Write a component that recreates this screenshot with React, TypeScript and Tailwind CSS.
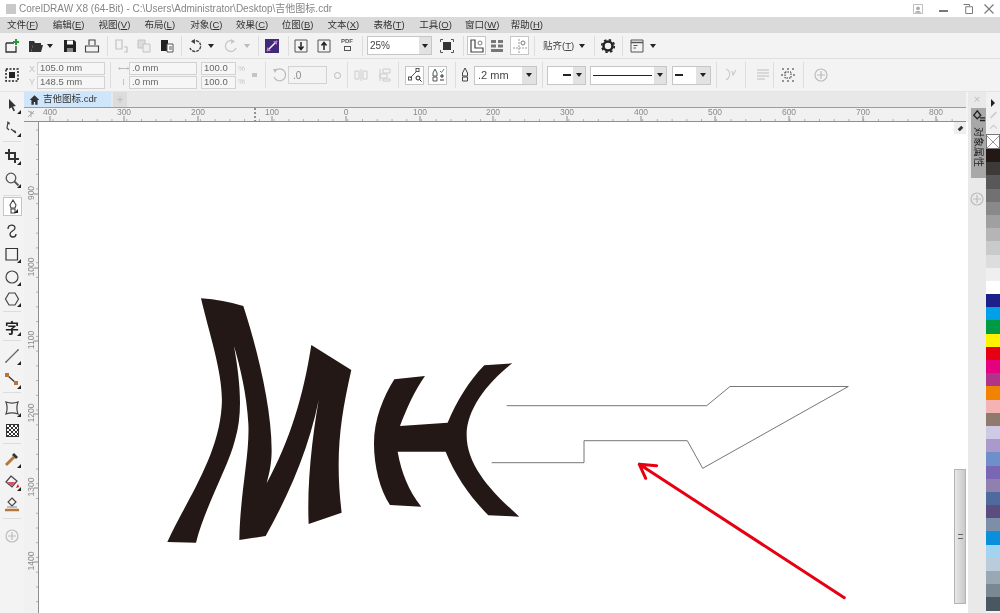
import type { ReactNode } from "react";

const menus = [
  ["文件", "F"], ["编辑", "E"], ["视图", "V"], ["布局", "L"], ["对象", "C"], ["效果", "C"],
  ["位图", "B"], ["文本", "X"], ["表格", "T"], ["工具", "O"], ["窗口", "W"], ["帮助", "H"],
];

const swatches = [
  "#231815", "#3e3a39", "#595757", "#727171", "#898989", "#9fa0a0", "#b5b5b6", "#c9caca", "#dcdddd", "#efefef", "#ffffff",
  "#1d2088", "#00a0e9", "#009944", "#fff100", "#e60012", "#e4007f", "#b0358a", "#f08300", "#f5b2b2", "#8f7a6e",
  "#cfc9e6", "#a99acb", "#6f8fcb", "#7a66b2", "#9080b0", "#4f6a9e", "#5c4d80", "#7d8fa8", "#0a8fdc", "#a0d4f0",
  "#b8ccdc", "#9aa8b4", "#7a8894", "#4a5660",
];

function Ico({ className = "", children }: { className?: string; children: ReactNode }) {
  return (
    <span className={`flex h-[16px] w-[16px] shrink-0 items-center justify-center ${className}`}>
      <svg className="h-[16px] w-[16px]" viewBox="0 0 16 16" fill="none">
        {children}
      </svg>
    </span>
  );
}

function Sep({ className = "" }: { className?: string }) {
  return <span className={`h-[20px] w-px shrink-0 bg-[#dddddd] ${className}`} />;
}

function Caret({ className = "" }: { className?: string }) {
  return <span className={`h-0 w-0 shrink-0 border-x-[3px] border-t-[4px] border-x-transparent border-t-[#222222] ${className}`} />;
}

function Combo({ className = "", btn = "w-[12px]", children }: { className?: string; btn?: string; children: ReactNode }) {
  return (
    <div className={`flex h-[19px] shrink-0 items-stretch border border-[#c6c6c6] bg-white ${className}`}>
      <div className="flex min-w-0 flex-1 items-center px-[2px]">{children}</div>
      <div className={`flex shrink-0 items-center justify-center bg-[#e2e2e2] ${btn}`}>
        <Caret />
      </div>
    </div>
  );
}

function Field({ className = "", children }: { className?: string; children: ReactNode }) {
  return (
    <div className={`flex h-[13px] items-center border border-[#d2d2d2] bg-[#f6f6f6] pl-[2px] text-[9.500px] text-[#666666] ${className}`}>
      {children}
    </div>
  );
}

function Plus({ className = "" }: { className?: string }) {
  return (
    <Ico className={className}>
      <circle cx="8" cy="8" r="6" stroke="#bdbdbd" strokeWidth="1.200" />
      <path d="M8 4v8M4 8h8" stroke="#bdbdbd" strokeWidth="1.200" />
    </Ico>
  );
}

function ToolCell({ className = "", children, flag = true }: { className?: string; children: ReactNode; flag?: boolean }) {
  return (
    <div className={`relative flex h-[23px] w-[24px] shrink-0 items-center justify-center ${className}`}>
      {children}
      {flag && <span className="absolute bottom-[2px] right-[3px] h-0 w-0 border-b-[4px] border-l-[4px] border-b-[#222222] border-l-transparent" />}
    </div>
  );
}

function ToolSep() {
  return <div className="mx-[3px] h-px w-[18px] shrink-0 bg-[#dcdcdc]" />;
}

function Toolbox() {
  return (
    <div className="flex w-[24px] shrink-0 flex-col items-start bg-[#f3f3f3] pt-[1px]">
      <ToolCell>
        <Ico><path d="M5 2l7 7-3 .5 2 4-1.500 .7-2-4L5 12z" fill="#333333" /></Ico>
      </ToolCell>
      <ToolCell>
        <Ico>
          <path d="M4 2l-1 6 2 2M7 9l5 4" stroke="#444444" strokeWidth="1.200" />
          <path d="M3 1l3 2-1 2zM9 10l3 1-1 2z" fill="#333333" />
        </Ico>
      </ToolCell>
      <div className="h-[2px] shrink-0" />
      <ToolSep />
      <div className="h-[2px] shrink-0" />
      <ToolCell>
        <Ico><path d="M5 1v10h10M1 5h10v10" stroke="#333333" strokeWidth="2" /></Ico>
      </ToolCell>
      <ToolCell>
        <Ico>
          <circle cx="7" cy="7" r="4.800" stroke="#555555" strokeWidth="1.300" />
          <path d="M10.500 10.500l4 4" stroke="#555555" strokeWidth="1.800" />
        </Ico>
      </ToolCell>
      <div className="h-[5px] shrink-0" />
      <ToolSep />
      <div className="h-[1px] shrink-0" />
      <ToolCell className="ml-[3px] !h-[19px] !w-[19px] border border-[#c4c4c4] bg-white">
        <Ico>
          <path d="M8 1l3 5-1 3H6L5 6z" stroke="#444444" strokeWidth="1.100" />
          <path d="M6 10h4v4H6z" stroke="#444444" strokeWidth="1.100" />
        </Ico>
      </ToolCell>
      <div className="h-[3px] shrink-0" />
      <ToolCell flag={false}>
        <Ico><path d="M4 6c0-5 7-5 7-1 0 3-5 3-5 6 0 4 6 4 6 0" stroke="#333333" strokeWidth="1.300" /></Ico>
      </ToolCell>
      <ToolCell>
        <Ico><path d="M2 2.500h11.500V14H2z" stroke="#333333" strokeWidth="1.200" /></Ico>
      </ToolCell>
      <ToolCell>
        <Ico><circle cx="8" cy="8" r="6" stroke="#444444" strokeWidth="1.200" /></Ico>
      </ToolCell>
      <ToolCell className="!h-[21px]">
        <Ico><path d="M5 2h6l3.500 6L11 14H5L1.500 8z" stroke="#444444" strokeWidth="1.200" /></Ico>
      </ToolCell>
      <div className="h-[2px] shrink-0" />
      <ToolSep />
      <ToolCell className="mt-[3px]">
        <span className="text-[14px] leading-none font-bold text-[#222222] [font-family:'Noto_Sans_CJK_SC',sans-serif]">字</span>
      </ToolCell>
      <div className="h-[2px] shrink-0" />
      <ToolSep />
      <ToolCell className="mt-[3px]">
        <Ico><path d="M2 14L14 2" stroke="#666666" strokeWidth="1.300" /><path d="M1 15l2-1-1-1zM15 1l-2 1 1 1z" fill="#333333" /></Ico>
      </ToolCell>
      <ToolCell className="mt-[1px]">
        <Ico>
          <path d="M3 3l10 9" stroke="#333333" strokeWidth="1.300" />
          <rect x="1" y="1" width="4" height="4" fill="#b5763d" />
          <rect x="10" y="9" width="4" height="4" fill="#b5763d" />
        </Ico>
      </ToolCell>
      <div className="h-[1px] shrink-0" />
      <ToolSep />
      <ToolCell className="mt-[3px]">
        <Ico><path d="M2 2c4 1.500 8 1.500 12 0-1.500 4-1.500 8 0 12-4-1.500-8-1.500-12 0 1.500-4 1.500-8 0-12z" stroke="#444444" strokeWidth="1.200" /></Ico>
      </ToolCell>
      <ToolCell flag={false}>
        <div className="h-[13px] w-[13px] border border-[#333333] bg-[length:4px_4px] bg-[conic-gradient(#333333_25%,#ffffff_0_50%,#333333_0_75%,#ffffff_0)]" />
      </ToolCell>
      <div className="h-[1px] shrink-0" />
      <ToolSep />
      <ToolCell className="mt-[3px]">
        <Ico>
          <path d="M2 14l8-8" stroke="#b5763d" strokeWidth="3" />
          <path d="M10 2l4 4-2 2-4-4z" fill="#333333" />
        </Ico>
      </ToolCell>
      <ToolCell>
        <Ico>
          <path d="M7 2l6 5-5 6-6-5z" stroke="#444444" strokeWidth="1.200" />
          <path d="M3 8h8l-3 4z" fill="#d9506a" />
          <path d="M14 10l1 3-3 1z" fill="#e60012" />
        </Ico>
      </ToolCell>
      <ToolCell flag={false}>
        <Ico>
          <path d="M8 1l4 4-4 4-4-4z" stroke="#444444" strokeWidth="1.100" />
          <path d="M1 13h14" stroke="#b5763d" strokeWidth="2.500" />
          <path d="M3 10h10" stroke="#888888" />
        </Ico>
      </ToolCell>
      <div className="h-[2px] shrink-0" />
      <ToolSep />
      <div className="mt-[9px] flex w-[24px] justify-center">
        <Plus />
      </div>
    </div>
  );
}

const hLabels = [
  ["400", 26], ["300", 100], ["200", 174], ["100", 248], ["0", 322], ["100", 396], ["200", 469],
  ["300", 543], ["400", 617], ["500", 691], ["600", 765], ["700", 839], ["800", 912],
] as const;

const vLabels = [["900", 193], ["1000", 267], ["1100", 340], ["1200", 413], ["1300", 487], ["1400", 561]] as const;

function HRuler() {
  const minor = Array.from({ length: 62 }, (_, i) => 29 + i * 14.74);
  return (
    <svg className="block h-[14px] w-full shrink-0 bg-[#f1f1f1]" viewBox="0 0 942 14">
      {minor.map((x) => (
        <path key={x} d={`M${x} 11v2`} stroke="#b0b0b0" strokeWidth="1" />
      ))}
      {hLabels.map(([t, x]) => (
        <g key={`${t}-${x}`}>
          <path d={`M${x} 8v5`} stroke="#8c8c8c" />
          <text x={x} y="7" textAnchor="middle" fontSize="8.500" fill="#8a8a8a" fontFamily="Liberation Sans, sans-serif">{t}</text>
        </g>
      ))}
      <path d="M0 13.500h942" stroke="#8e8e8e" />
      <path d="M231 0v13" stroke="#333333" strokeDasharray="2 2" />
      <path d="M4 3l6 3M4 9l6-6M7 3v6" stroke="#aaaaaa" />
    </svg>
  );
}

function VRuler() {
  return (
    <svg className="block h-full w-[15px] shrink-0 bg-[#f1f1f1]" viewBox="0 122 15 491">
      {Array.from({ length: 34 }, (_, i) => 130 + i * 14.74).map((y) => (
        <path key={y} d={`M12 ${y}h2`} stroke="#b0b0b0" />
      ))}
      {vLabels.map(([t, y]) => (
        <g key={t}>
          <path d={`M10 ${y + 1}h4`} stroke="#8c8c8c" />
          <text x="0" y="0" transform={`translate(10 ${y}) rotate(-90)`} textAnchor="middle" fontSize="8.500" fill="#8a8a8a" fontFamily="Liberation Sans, sans-serif">{t}</text>
        </g>
      ))}
      <path d="M14.500 122v491" stroke="#8e8e8e" />
    </svg>
  );
}

function Artwork() {
  return (
    <svg className="block h-full w-full" viewBox="39 122 929 491">
      {/* letters traced from a 3x crop, so they sit in their own 3x space */}
      <g transform="translate(150 280) scale(0.3333)" fill="#231815">
        <path d="M153 55Q220 60 280 78C320 200 365 380 365 510C365 550 358 580 350 610C420 480 460 350 484 195L604 270C570 420 555 530 575 698L476 732C470 600 490 440 515 312C490 470 430 620 347 768L268 780C270 640 300 520 295 430C290 340 270 260 252 198C270 300 280 400 255 480C235 560 165 680 138 788L52 786C110 660 205 530 215 380C222 290 180 170 153 55Z" />
        <path d="M733 298L825 288C795 330 770 385 750 438L893 428C920 365 955 305 1003 256L1087 250C1010 310 950 390 950 465C950 560 1030 640 1108 710L1015 706C960 650 915 585 887 515L743 515C755 580 775 630 814 680L720 675C690 630 672 560 672 490C672 420 700 350 733 298Z" />
      </g>
      <path
        fill="none"
        stroke="#777777"
        strokeWidth="1"
        d="M506.700 405.700H706.700L730 386.500H848.300L702.700 468.300L687.300 440.700H584V462.700H491.700"
      />
      <path fill="none" stroke="#e60012" strokeWidth="3" strokeLinecap="round" strokeLinejoin="round" d="M844.300 597.700L639.300 464.300M656.700 465.700L639.300 464.300L645.700 478.300" />
    </svg>
  );
}

export default function App() {
  return (
    <div className="flex h-[613px] w-[1000px] flex-col overflow-hidden bg-[#f3f3f3] text-[#333333] blur-[0.3px] [font-family:'Liberation_Sans','Noto_Sans_CJK_SC',sans-serif]">
      {/* title bar */}
      <div className="flex h-[17px] shrink-0 items-center bg-white pl-[6px] pr-[5px]">
        <span className="h-[10px] w-[10px] shrink-0 bg-[#c9c9c9]" />
        <span className="ml-[3px] flex-1 text-[10px] leading-none text-[#858585]">CorelDRAW X8 (64-Bit) - C:\Users\Administrator\Desktop\吉他图标.cdr</span>
        <Ico className="!h-[12px] !w-[12px]"><path d="M2 2h12v12H2z" stroke="#aaaaaa" /><circle cx="8" cy="7" r="2.500" fill="#aaaaaa" /><path d="M4 13c0-3 8-3 8 0z" fill="#aaaaaa" /></Ico>
        <span className="ml-[15px] mt-[4px] h-[2px] w-[9px] shrink-0 bg-[#777777]" />
        <Ico className="ml-[14px] !h-[12px] !w-[12px]"><path d="M2 2h8v2M5 5h9v9H5z" stroke="#777777" strokeWidth="1.300" /></Ico>
        <Ico className="ml-[9px] !h-[12px] !w-[12px]"><path d="M2 2l12 12M14 2L2 14" stroke="#777777" strokeWidth="1.500" /></Ico>
      </div>

      {/* menu bar */}
      <div className="flex h-[16px] shrink-0 items-center bg-[#dadada] pl-[7px]">
        {menus.map(([name, key]) => (
          <span key={name} className="w-[45.800px] shrink-0 whitespace-nowrap text-[9.500px] leading-none text-[#333333]">
            {name}(<span className="underline">{key}</span>)
          </span>
        ))}
      </div>

      {/* standard toolbar */}
      <div className="flex h-[26px] shrink-0 items-center border-b border-[#dedede] pl-[4px]">
        <Ico><path d="M2 5h8M2 5v9h10V8" stroke="#333333" strokeWidth="1.300" /><path d="M12 1v6M9 4h6" stroke="#1f9d3a" strokeWidth="2" /></Ico>
        <Ico className="ml-[8px]"><path d="M1 3h5l1 2h6v2H5l-2 7H1z" fill="#333333" /><path d="M5 7h10l-2 7H3z" fill="#333333" /></Ico>
        <Caret className="ml-[3px]" />
        <Ico className="ml-[9px]"><path d="M2 2h10l2 2v10H2z" fill="#222222" /><path d="M5 2.500h6v4H5z" fill="#ffffff" /><path d="M5 10h6v4H5z" fill="#888888" /></Ico>
        <Ico className="ml-[6px]"><path d="M5 7V2h6v5M1.500 8h13v6h-13z" stroke="#444444" strokeWidth="1.100" /></Ico>
        <Sep className="ml-[7px]" />
        <Ico className="ml-[5px]"><path d="M3 2h6v9H3zM11 9h3v5h-3" stroke="#c2c2c2" strokeWidth="1.200" /></Ico>
        <Ico className="ml-[7px]"><path d="M2 2h7v8H2z" fill="#dddddd" stroke="#c2c2c2" /><path d="M7 6h7v8H7z" fill="#eeeeee" stroke="#c2c2c2" /></Ico>
        <Ico className="ml-[7px]"><path d="M2 2h7v11H2z" fill="#222222" /><path d="M8 6h6v8H8z" fill="#ffffff" stroke="#555555" /><path d="M10 9h3M10 11h3" stroke="#555555" /></Ico>
        <Sep className="ml-[6px]" />
        <Ico className="ml-[5px]"><path d="M5 3.500A5.500 5.500 0 1 1 3 10" stroke="#444444" strokeWidth="1.400" strokeDasharray="3 1" /><path d="M8 1v5L4 3.500z" fill="#444444" /></Ico>
        <Caret className="ml-[5px]" />
        <Ico className="ml-[9px]"><path d="M11 3.500A5.500 5.500 0 1 0 13 10" stroke="#c9c9c9" strokeWidth="1.400" /><path d="M8 1v5l4-2.500z" fill="#c9c9c9" /></Ico>
        <span className="ml-[5px] h-0 w-0 shrink-0 border-x-[3px] border-t-[4px] border-x-transparent border-t-[#bbbbbb]" />
        <Sep className="ml-[8px]" />
        <Ico className="ml-[5px]"><path d="M1 1h14v14H1z" fill="#3d2a78" /><path d="M3 13L13 3" stroke="#ffffff" strokeWidth="1.500" /><path d="M9 3h4v4zM3 9v4h4z" fill="#d86fd0" /></Ico>
        <Sep className="ml-[8px]" />
        <Ico className="ml-[4px]"><path d="M2 2h12v12H2z" stroke="#555555" /><path d="M8 4v7M5.500 8.500L8 11.500l2.500-3" stroke="#222222" strokeWidth="1.500" /></Ico>
        <Ico className="ml-[7px]"><path d="M2 2h12v12H2z" stroke="#555555" /><path d="M8 12V5M5.500 7.500L8 4.500l2.500 3" stroke="#222222" strokeWidth="1.500" /></Ico>
        <span className="ml-[7px] flex h-[16px] w-[16px] shrink-0 flex-col items-center text-[6px] leading-[7px] font-bold text-[#555555]">
          PDF
          <span className="mt-[1px] h-[5px] w-[7px] border border-[#555555]" />
        </span>
        <Sep className="ml-[7px]" />
        <Combo className="ml-[4px] w-[65px]" btn="w-[12px]">
          <span className="text-[10px] text-[#444444]">25%</span>
        </Combo>
        <Ico className="ml-[7px]"><path d="M4 4h8v8H4z" fill="#333333" /><path d="M1.500 4V1.500H4M12 1.500h2.500V4M14.500 12v2.500H12M4 14.500H1.500V12" stroke="#555555" /></Ico>
        <Sep className="ml-[8px]" />
        <span className="ml-[3px] flex h-[19px] w-[19px] shrink-0 items-center justify-center border border-[#c6c6c6] bg-white">
          <Ico><path d="M2 2h4v8h8v4H2z" stroke="#444444" strokeWidth="1.200" /><circle cx="11" cy="5" r="2" stroke="#777777" /></Ico>
        </span>
        <Ico className="ml-[3px]"><path d="M2 2h5v3H2zM9 2h5v3H9zM2 6.500h5v3H2zM9 6.500h5v3H9zM2 11h12v3H2z" fill="#777777" /></Ico>
        <span className="ml-[5px] flex h-[19px] w-[19px] shrink-0 items-center justify-center border border-[#c6c6c6] bg-white">
          <Ico><path d="M7 1v14M1 10h14" stroke="#999999" strokeDasharray="2 1" /><circle cx="11" cy="5" r="2" stroke="#777777" /></Ico>
        </span>
        <Sep className="ml-[5px]" />
        <span className="ml-[8px] w-[31px] shrink-0 whitespace-nowrap text-[9.500px] leading-none text-[#444444]">贴齐(<span className="underline">T</span>)</span>
        <Caret className="ml-[5px]" />
        <Sep className="ml-[9px]" />
        <Ico className="ml-[5px]"><circle cx="8" cy="8" r="4.500" stroke="#222222" strokeWidth="2.500" /><circle cx="8" cy="8" r="6.300" stroke="#222222" strokeWidth="1.600" strokeDasharray="2.500 2.450" /></Ico>
        <Sep className="ml-[6px]" />
        <Ico className="ml-[6px]"><path d="M2 2h12v12H2z" stroke="#555555" /><path d="M2 4.500h12" stroke="#555555" strokeWidth="1.500" /><path d="M4.500 7.500h4M4.500 10h2.500" stroke="#555555" /></Ico>
        <Caret className="ml-[5px]" />
      </div>

      {/* property bar */}
      <div className="flex h-[33px] shrink-0 items-center border-b border-[#e4e4e4] pl-[4px]">
        <Ico><path d="M2 2h12v12H2z" stroke="#222222" strokeDasharray="2 1.500" strokeWidth="1.500" /><path d="M5 5h6v6H5z" fill="#222222" /></Ico>
        <div className="ml-[9px] flex w-[8px] shrink-0 flex-col gap-[1px] text-[9px] leading-[12px] text-[#c4c4c4]">
          <span>X</span>
          <span>Y</span>
        </div>
        <div className="flex w-[68px] shrink-0 flex-col gap-[1px]">
          <Field>105.0 mm</Field>
          <Field>148.5 mm</Field>
        </div>
        <Sep className="ml-[5px] !h-[26px]" />
        <div className="ml-[7px] flex w-[11px] shrink-0 flex-col items-center gap-[1px]">
          <span className="h-[12px] text-[8px] leading-[12px] text-[#bbbbbb]">⟷</span>
          <span className="h-[12px] text-[9px] leading-[12px] text-[#bbbbbb]">I</span>
        </div>
        <div className="flex w-[68px] shrink-0 flex-col gap-[1px]">
          <Field>.0 mm</Field>
          <Field>.0 mm</Field>
        </div>
        <div className="ml-[4px] flex w-[35px] shrink-0 flex-col gap-[1px]">
          <Field>100.0</Field>
          <Field>100.0</Field>
        </div>
        <div className="ml-[2px] flex w-[8px] shrink-0 flex-col gap-[1px] text-[8px] leading-[12px] text-[#c4c4c4]">
          <span>%</span>
          <span>%</span>
        </div>
        <span className="ml-[6px] h-[4px] w-[5px] shrink-0 bg-[#c4c4c4]" />
        <Sep className="ml-[8px] !h-[26px]" />
        <Ico className="ml-[5px]"><path d="M4 4a6 6 0 1 1-1 6" stroke="#bbbbbb" strokeWidth="1.200" /><path d="M2 2l4 0-2 4z" fill="#bbbbbb" /></Ico>
        <div className="ml-[1px] flex h-[18px] w-[39px] shrink-0 items-center border border-[#d2d2d2] pl-[4px] text-[10px] text-[#888888]">.0</div>
        <span className="ml-[7px] h-[7px] w-[7px] shrink-0 rounded-full border border-[#bbbbbb]" />
        <Sep className="ml-[6px] !h-[26px]" />
        <Ico className="ml-[5px]"><path d="M2 4h4v8H2zM10 4h4v8h-4z" stroke="#cccccc" /><path d="M8 2v12" stroke="#cccccc" /></Ico>
        <Ico className="ml-[8px]"><path d="M6 2h7v4H6zM3 7h7v4H3zM6 12h7v2H6zM3 2v12" stroke="#cccccc" /></Ico>
        <Sep className="ml-[5px] !h-[26px]" />
        <span className="ml-[6px] flex h-[19px] w-[19px] shrink-0 items-center justify-center border border-[#c6c6c6] bg-white">
          <Ico><path d="M3 11l7-7" stroke="#555555" /><rect x="1.500" y="10" width="3" height="3" stroke="#555555" /><rect x="9" y="1.500" width="3" height="3" stroke="#555555" /><circle cx="11" cy="11" r="2" stroke="#222222" /><path d="M12.500 12.500l2 2" stroke="#222222" /></Ico>
        </span>
        <span className="ml-[4px] flex h-[19px] w-[19px] shrink-0 items-center justify-center border border-[#c6c6c6] bg-white">
          <Ico><path d="M5 2l2 4v3H3V6z" stroke="#555555" /><path d="M3 10h4v4H3z" stroke="#555555" /><path d="M10 4l1.500 1.500L14 2" stroke="#2e9e4d" /><path d="M10 9h4M12 7v4M10 13h4" stroke="#333333" /></Ico>
        </span>
        <Sep className="ml-[8px] !h-[26px]" />
        <Ico className="ml-[1px]"><path d="M8 1l2.500 5v3h-5V6z" stroke="#444444" /><path d="M5.500 10h5v4h-5z" stroke="#444444" /></Ico>
        <Combo className="ml-[1px] w-[63px]" btn="w-[14px]">
          <span className="pl-[1px] text-[11px] text-[#444444]">.2 mm</span>
        </Combo>
        <Sep className="ml-[5px] !h-[26px]" />
        <Combo className="ml-[4px] w-[39px]" btn="w-[12px]">
          <span className="ml-auto h-[2px] w-[8px] bg-[#222222]" />
        </Combo>
        <Combo className="ml-[4px] w-[77px]" btn="w-[12px]">
          <span className="h-px w-full bg-[#222222]" />
        </Combo>
        <Combo className="ml-[5px] w-[39px]" btn="w-[14px]">
          <span className="h-[2px] w-[8px] bg-[#222222]" />
        </Combo>
        <Sep className="ml-[5px] !h-[26px]" />
        <Ico className="ml-[6px]"><path d="M3 2c3 1 5 4 3 8-1 2-3 3-3 3M9 4l1 4 3-5" stroke="#c9c9c9" strokeWidth="1.100" /></Ico>
        <Sep className="ml-[6px] !h-[26px]" />
        <Ico className="ml-[9px]"><path d="M2 3h12M2 6h12M2 9h12M2 12h8" stroke="#bdbdbd" /></Ico>
        <Sep className="ml-[2px] !h-[26px]" />
        <Ico className="ml-[6px]"><path d="M2 2h2M7 2h2M12 2h2M2 14h2M7 14h2M12 14h2M2 7v2M14 7v2" stroke="#333333" /><path d="M5 5h6v6H5z" stroke="#333333" strokeDasharray="1.500 1" /></Ico>
        <Sep className="ml-[7px] !h-[26px]" />
        <Plus className="ml-[9px]" />
      </div>

      {/* main area */}
      <div className="flex min-h-0 flex-1">
        <Toolbox />

        <div className="flex w-[944px] shrink-0 flex-col">
          <div className="mr-[2px] flex h-[16px] shrink-0 items-stretch border-b border-[#4fb4e6] bg-[#e8e8e8]">
            <div className="flex w-[87px] shrink-0 items-center gap-[3px] bg-[#cfe5fa] pl-[5px] text-[9.500px] text-[#333333]">
              <Ico className="!h-[11px] !w-[11px]"><path d="M8 1L1 8h2.500v7h3.500v-4h2v4h3.500V8H15z" fill="#333333" /></Ico>
              <span>吉他图标.cdr</span>
            </div>
            <div className="ml-[2px] flex w-[14px] items-center justify-center bg-[#dcdcdc] text-[12px] leading-none text-[#bdbdbd]">+</div>
          </div>
          <div className="mr-[2px]">
            <HRuler />
          </div>
          <div className="flex min-h-0 flex-1">
            <VRuler />
            <div className="relative min-w-0 flex-1 bg-white">
              <Artwork />
              <div className="absolute right-[2px] top-[347px] flex h-[135px] w-[12px] items-center justify-center border border-[#b4b4b4] bg-gradient-to-r from-[#e8e8e8] to-[#c8c8c8]">
                <div className="h-[5px] w-[5px] border-y border-[#666666]" />
              </div>
              <div className="absolute right-[2px] top-0 flex h-[12px] w-[12px] items-center justify-center bg-[#eeeeee]">
                <span className="h-[3px] w-[5px] -rotate-45 bg-[#333333]" />
              </div>
            </div>
          </div>
        </div>

        {/* docker */}
        <div className="flex w-[18px] shrink-0 flex-col items-center bg-[#e9e9e9]">
          <span className="h-[16px] text-[11px] leading-[15px] text-[#bdbdbd]">×</span>
          <div className="ml-[3px] flex h-[70px] w-[15px] flex-col items-center bg-[#a8a8a8] pt-[2px]">
            <Ico className="!h-[14px] !w-[14px]"><path d="M6 1L2 6l4 4 4-4zM9 9h6M9 12h6" stroke="#222222" strokeWidth="1.500" /></Ico>
            <span className="mt-[3px] text-[10px] leading-[11px] text-[#222222] [text-orientation:sideways] [writing-mode:vertical-rl]">对象属性</span>
          </div>
          <Plus className="mt-[13px]" />
        </div>

        {/* colour palette */}
        <div className="flex w-[14px] shrink-0 flex-col bg-[#f1f1f1]">
          <div className="flex h-[42px] shrink-0 flex-col items-center pt-[7px]">
            <span className="h-0 w-0 border-y-[4px] border-l-[4px] border-y-transparent border-l-[#222222]" />
            <Ico className="mt-[3px] !h-[9px] !w-[9px]"><path d="M3 13L13 3" stroke="#cccccc" strokeWidth="3" /></Ico>
            <Ico className="mt-[3px] !h-[9px] !w-[9px]"><path d="M2 11l6-6 6 6" stroke="#cccccc" strokeWidth="2" /></Ico>
          </div>
          <Ico className="!h-[15px] !w-[14px] border border-[#777777] bg-white"><path d="M0 0l16 16M16 0L0 16" stroke="#777777" strokeWidth="1" /></Ico>
          {swatches.map((c) => (
            <div key={c} className="h-[13.200px] shrink-0" style={{ backgroundColor: c }} />
          ))}
        </div>
      </div>
    </div>
  );
}
